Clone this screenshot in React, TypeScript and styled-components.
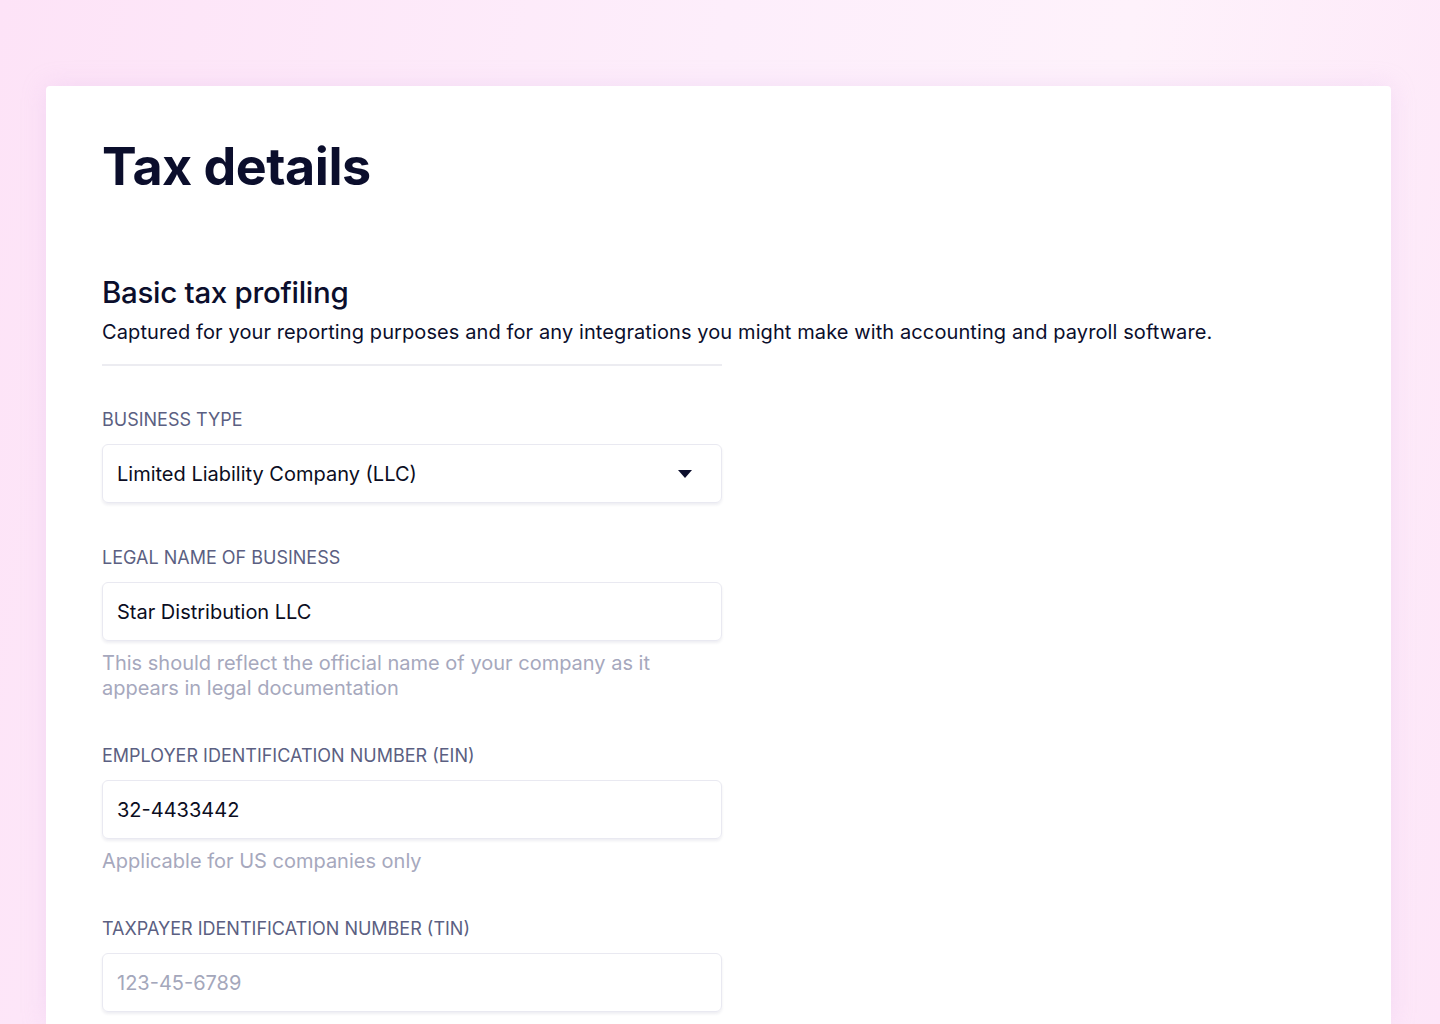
import styled, { createGlobalStyle } from "styled-components";

const GlobalStyle = createGlobalStyle`
  html, body {
    margin: 0;
    padding: 0;
  }
  body {
    font-family: "Inter", "Liberation Sans", sans-serif;
    background: #fde6f8;
  }
`;

const Page = styled.div`
  min-height: 1024px;
  box-sizing: border-box;
  padding: 86px 49px 0 46px;
  background: linear-gradient(100deg, #fde3f7 0%, #fdeefb 45%, #fef2fb 70%, #fde6f8 100%);
  overflow: hidden;
`;

const Card = styled.div`
  background: #ffffff;
  border-radius: 4px 4px 0 0;
  min-height: 938px;
  padding: 0 56px;
  box-shadow: 0 0 24px rgba(215, 170, 235, 0.25);
`;

const Title = styled.h1`
  margin: 0;
  padding-top: 42px;
  font-size: 52px;
  line-height: 78px;
  font-weight: 700;
  color: #0b0e2c;
  letter-spacing: -0.5px;
`;

const Section = styled.section`
  margin-top: 67px;
`;

const SectionTitle = styled.h2`
  margin: 0;
  font-size: 29.5px;
  line-height: 38px;
  font-weight: 500;
  color: #0b0e2c;
  letter-spacing: -0.3px;
`;

const SectionText = styled.p`
  margin: 7px 0 0;
  font-size: 20px;
  line-height: 28px;
  color: #0b0e2c;
  letter-spacing: 0.1px;
`;

const Divider = styled.hr`
  width: 620px;
  margin: 18px 0 0;
  border: none;
  border-top: 2px solid #ececf1;
`;

const Form = styled.div`
  width: 620px;
  display: flex;
  flex-direction: column;
  padding-top: 43px;
  gap: 44px;
`;

const Field = styled.div`
  display: flex;
  flex-direction: column;
`;

const Label = styled.label`
  font-size: 18px;
  line-height: 22px;
  color: #5b5f82;
  text-transform: uppercase;
  margin-bottom: 13px;
`;

const Box = styled.div<{ $muted?: boolean }>`
  height: 59px;
  box-sizing: border-box;
  border: 1px solid #e9e9f1;
  border-radius: 6px;
  box-shadow: 0 2px 3px rgba(40, 40, 90, 0.08);
  display: flex;
  align-items: center;
  justify-content: space-between;
  padding: 0 28px 0 14px;
  font-size: 20px;
  color: ${(p) => (p.$muted ? "#a4a7bb" : "#0b0d22")};
`;

const Help = styled.div`
  margin-top: 10px;
  font-size: 20px;
  line-height: 25px;
  color: #a6a8bd;
  max-width: 570px;
`;

const Caret = () => (
  <svg width="16" height="10" viewBox="0 0 16 10">
    <path d="M1 1h14L8 9z" fill="#0b0e2c" />
  </svg>
);

export default function App() {
  return (
    <>
      <GlobalStyle />
      <Page>
        <Card>
          <Title>Tax details</Title>
          <Section>
            <SectionTitle>Basic tax profiling</SectionTitle>
            <SectionText>
              Captured for your reporting purposes and for any integrations you might make with
              accounting and payroll software.
            </SectionText>
            <Divider />
            <Form>
              <Field>
                <Label>Business type</Label>
                <Box>
                  Limited Liability Company (LLC)
                  <Caret />
                </Box>
              </Field>
              <Field>
                <Label>Legal name of business</Label>
                <Box>Star Distribution LLC</Box>
                <Help>
                  This should reflect the official name of your company as it appears in legal
                  documentation
                </Help>
              </Field>
              <Field>
                <Label>Employer identification number (EIN)</Label>
                <Box>32-4433442</Box>
                <Help>Applicable for US companies only</Help>
              </Field>
              <Field>
                <Label>Taxpayer identification number (TIN)</Label>
                <Box $muted>123-45-6789</Box>
              </Field>
            </Form>
          </Section>
        </Card>
      </Page>
    </>
  );
}
